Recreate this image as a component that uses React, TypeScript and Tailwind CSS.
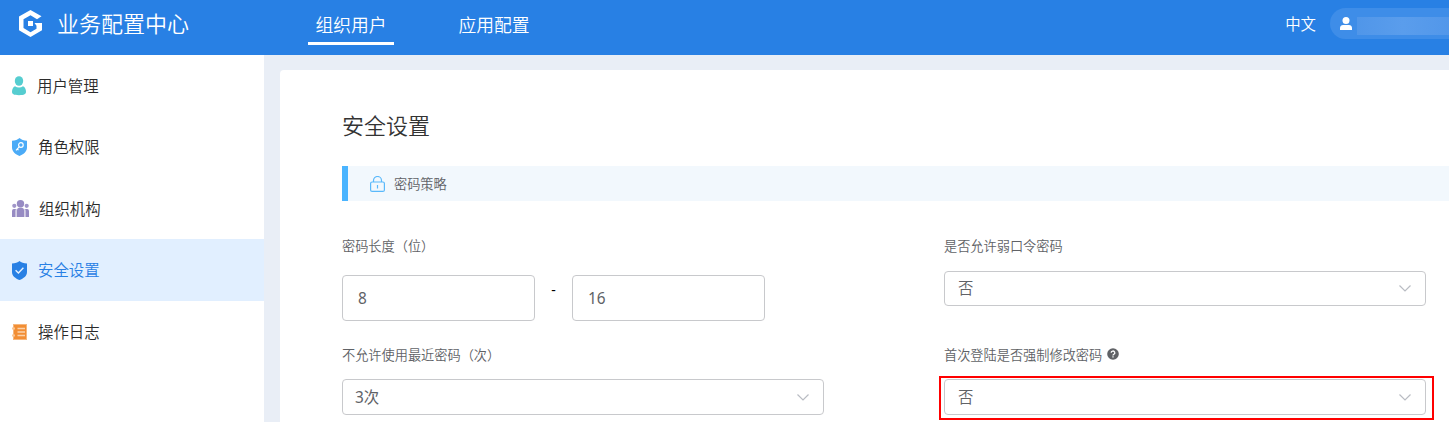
import React from 'react';

const UserIcon = () => (
  <svg width="14" height="20" viewBox="0 0 14 20" fill="#56cdd0">
    <ellipse cx="7" cy="5" rx="4.2" ry="4.8" />
    <path d="M3 10.2C4.2 11 5.5 11.4 7 11.4s2.800-.4 4-1.200c2 .8 3 3 3 5.600 0 2.200-1.500 3.400-7 3.400s-7-1.200-7-3.400c0-2.600 1-4.800 3-5.600z" />
  </svg>
);

const RoleIcon = () => (
  <svg width="15" height="18" viewBox="0 0 15 18" fill="none">
    <path d="M7.500 0C9 1.500 12 2.600 15 2.800V9.500c0 4-3.500 7-7.500 8.500C3.500 16.500 0 13.500 0 9.500V2.800C3 2.600 6 1.500 7.500 0z" fill="#4babf7" />
    <circle cx="8.900" cy="7" r="2.300" stroke="#fff" strokeWidth="1.200" />
    <path d="M7.200 8.800L4 12.300M5.200 11l1.300 1.100" stroke="#fff" strokeWidth="1.200" />
  </svg>
);

const OrgIcon = () => (
  <svg width="17" height="17" viewBox="0 0 17 17" fill="#978bc3">
    <circle cx="8.500" cy="3.700" r="3.700" />
    <circle cx="2.300" cy="5.800" r="2.100" opacity=".9" />
    <circle cx="14.700" cy="5.800" r="2.100" opacity=".9" />
    <path d="M5 17V10q0-2 2-2.200h3q2 .2 2 2.200v7z" />
    <path d="M0 17v-6q0-2 1.800-2H4q-.6 1-.6 2v6zM17 17v-6q0-2-1.800-2H13q.6 1 .6 2v6z" />
    <path d="M3.400 17v-6q0-1 .6-2h1.300Q5 9.500 5 10v7zM13.600 17v-6q0-1-.6-2h-1.300q.3.500.3 1v7z" opacity=".4" />
  </svg>
);

const SafeIcon = () => (
  <svg width="15" height="19" viewBox="0 0 15 19" fill="none">
    <path d="M7.500 0C9 1.500 12 2.500 15 2.500V11c0 4-3.500 6.500-7.500 8C3.500 17.500 0 15 0 11V2.500C3 2.500 6 1.500 7.500 0z" fill="#2880e4" />
    <path d="M3.600 9.300l2.800 2.700 5-5.300" stroke="#e6f1ff" strokeWidth="1.400" />
  </svg>
);

const LogIcon = () => (
  <svg width="15" height="16" viewBox="0 0 15 16" fill="none">
    <path d="M1 0h14v16H1z" fill="#f6b77d" />
    <path d="M2 1h12v14H2z" fill="#f28e34" />
    <path d="M5.500 4.500H13M5.500 8H13M5.500 11.500H13" stroke="#fbd2aa" strokeWidth="1.300" />
    <path d="M0 4.500h3M0 11.500h3" stroke="#f9c594" strokeWidth="2" />
    <path d="M3.500 4.500h1M2 8h2.500M3.500 11.500h1" stroke="#f28e34" strokeWidth="1.500" />
  </svg>
);

const menu = [
  { title: '用户管理', icon: <UserIcon />, gap: 'gap-[11px]' },
  { title: '角色权限', icon: <RoleIcon />, gap: 'gap-[11px]' },
  { title: '组织机构', icon: <OrgIcon />, gap: 'gap-[10px]' },
  { title: '安全设置', icon: <SafeIcon />, gap: 'gap-[11px]', active: true },
  { title: '操作日志', icon: <LogIcon />, gap: 'gap-[11px] pt-px' },
];

const Label = ({ children }: { children: React.ReactNode }) => (
  <div className="h-5 flex items-center text-[13.2px] leading-5 text-[#606266]">{children}</div>
);

const Select = ({ value, className }: { value: string; className: string }) => (
  <div className={`${className} w-[482px] flex items-center justify-between border border-[#c8c9cc] rounded pr-[14px] text-[15.4px] text-[#606266]`}>
    <span>{value}</span>
    <svg width="12" height="7" viewBox="0 0 12 7" fill="none" stroke="#b9bcc3" strokeWidth="1.200">
      <path d="M.5.500L6 6 11.500.500" />
    </svg>
  </div>
);

const Input = ({ value }: { value: string }) => (
  <div className="w-[193px] h-[46px] flex items-center border border-[#c8c9cc] rounded px-[15px] pt-[2px] text-[15.4px] font-normal text-[#606266]">
    {value}
  </div>
);

const Header = () => (
  <header className="h-[55px] shrink-0 bg-[#2880e4] text-white flex items-center">
    <svg className="ml-[19px] mb-2 shrink-0" width="23" height="27" viewBox="0 0 23 27" fill="#fff">
      <path d="M11.500 0L22.500 6.300 18 9.200 11.500 5.200 4.500 9.200V18l7 4.200 6-3.500v-3L15.500 13H23v7.300L11.500 27 0 20.300V6.600z" />
      <path d="M9 11h5v5H9z" />
    </svg>
    <h1 className="ml-[15px] w-[251px] text-[22px] leading-[45px] pb-[8px]">业务配置中心</h1>
    <nav className="flex h-full text-[17.800px] pt-[6px]">
      <div className="w-[86px] h-[39px] pt-[2px] border-b-3 border-white flex items-center justify-center">组织用户</div>
      <div className="w-[86px] h-[39px] pt-[2px] ml-[57px] border-b-3 border-transparent flex items-center justify-center">应用配置</div>
    </nav>
    <span className="ml-auto mr-[14px] text-[15.400px] pb-[6px]">中文</span>
    <div className="w-[119px] h-[31px] mb-2 pl-[10px] rounded-l-full bg-[#3e8de8] flex items-center">
      <svg width="12" height="13" viewBox="0 0 12 13" fill="#fff">
        <circle cx="6" cy="3.500" r="3.500" />
        <path d="M0 13v-2c0-2 1.500-3 3-3h6c1.500 0 3 1 3 3v2z" />
      </svg>
      <div className="ml-[5px] mt-[5px] h-[18px] flex-1 bg-linear-to-r from-[#5096e9] via-[#5a9dec] to-[#5297ea]" />
    </div>
  </header>
);

const App = () => {
  return (
    <div className="w-full h-[422px] overflow-hidden flex flex-col bg-[#e9eef6] font-['Noto_Sans','Noto_Sans_CJK_SC',sans-serif] font-[350]">
      <Header />
      <div className="flex flex-1 min-h-0">
        <aside className="w-[264px] shrink-0 bg-white text-[15.400px] text-[#2b2b2b]">
          {menu.map((item) => (
            <div
              key={item.title}
              className={`h-[61.450px] pl-3 flex items-center ${item.gap} ${item.active ? 'bg-[#e1efff] text-[#2880e4]' : ''}`}
            >
              {item.icon}
              <span className="pt-px">{item.title}</span>
            </div>
          ))}
        </aside>

        <main className="flex-1 min-w-0 ml-4 mt-[15px] pl-[62px] bg-white rounded-tl">
          <h2 className="pt-[39px] pb-px text-[22px] leading-8 text-[#333]">安全设置</h2>
          <div className="mt-6 h-[35px] border-l-6 border-[#4ab4ff] bg-[#f2f8fd] flex items-center pl-[22px] text-[13.200px] text-[#606266]">
            <svg width="15" height="16" viewBox="0 0 15 16" fill="none" stroke="#5ab9fb" strokeWidth="1.200">
              <rect x=".6" y="6" width="13.800" height="9.400" rx="1.500" />
              <path d="M3.500 6V4.500a4 4 0 0 1 8 0V6M7.500 9v3.500" />
            </svg>
            <span className="ml-[9px] pt-[2px]">密码策略</span>
          </div>

          <div className="mt-[35px] flex gap-[120px]">
            <div className="w-[482px] shrink-0">
              <Label>密码长度（位）</Label>
              <div className="mt-[19px] flex">
                <Input value="8" />
                <span className="w-[37px] text-center text-sm leading-[30px] font-normal text-black">-</span>
                <Input value="16" />
              </div>
              <div className="mt-6">
                <Label>不允许使用最近密码（次）</Label>
              </div>
              <div className="mt-[14px]">
                <Select value="3次" className="h-9 pt-px pl-3 font-normal" />
              </div>
            </div>

            <div className="w-[482px] shrink-0">
              <Label>是否允许弱口令密码</Label>
              <div className="mt-[15px]">
                <Select value="否" className="h-[35px] pl-[13px]" />
              </div>
              <div className="mt-[39px]">
                <Label>
                  首次登陆是否强制修改密码
                  <svg className="ml-[5px] mb-[3px]" width="12" height="12" viewBox="0 0 12 12">
                    <circle cx="6" cy="6" r="5.800" fill="#606266" />
                    <path d="M4.200 4.800a1.800 1.700 0 1 1 2.700 1.400q-.9.500-.9 1.200M6 8.200v1.300" fill="none" stroke="#fff" strokeWidth="1.300" />
                  </svg>
                </Label>
              </div>
              <div className="relative mt-[14px]">
                <Select value="否" className="h-9 pt-px pl-[13px]" />
                <div className="absolute -left-[5px] -top-[3px] w-[495px] h-11 border-2 border-[#ff0000]" />
              </div>
            </div>
          </div>
        </main>
      </div>
    </div>
  );
};

export default App;
